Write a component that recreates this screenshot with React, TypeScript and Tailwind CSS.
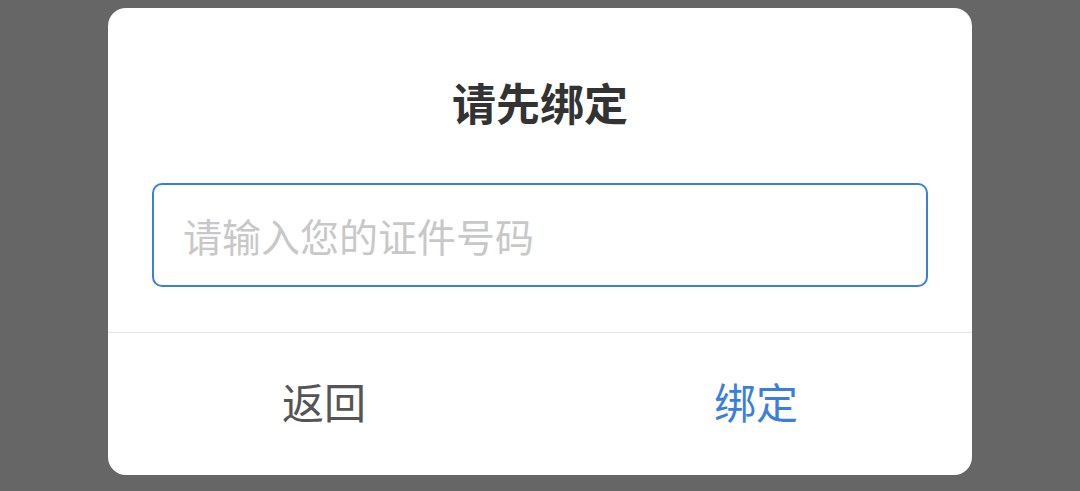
export default function App() {
  return (
    <main
      className="w-full h-[491px] bg-[#666666] flex justify-center pt-2"
      style={{ fontFamily: '"Noto Sans CJK SC", "Noto Sans", sans-serif' }}
    >
      <div className="w-[864px] h-[467px] bg-white rounded-[18px] flex flex-col">
        <h1 className="pt-[72px] text-center text-[44px] leading-[44px] font-semibold text-[#333333]">
          请先绑定
        </h1>

        <div className="mt-[59px] mx-[44px]">
          <input
            className="w-full h-[104px] border-2 border-[#3a7fdc] rounded-[10px] px-[29px] text-[39px] text-[#333333] placeholder:text-[#c8c8c8] outline-none bg-white"
            placeholder="请输入您的证件号码"
          />
        </div>

        <div className="mt-[45px] border-t border-[#e6e6e6] flex-1 flex pb-2">
          <button className="flex-1 flex items-center justify-center text-[42px] text-[#555555]">
            返回
          </button>
          <button className="flex-1 flex items-center justify-center text-[42px] text-[#3a7fdc]">
            绑定
          </button>
        </div>
      </div>
    </main>
  );
}
